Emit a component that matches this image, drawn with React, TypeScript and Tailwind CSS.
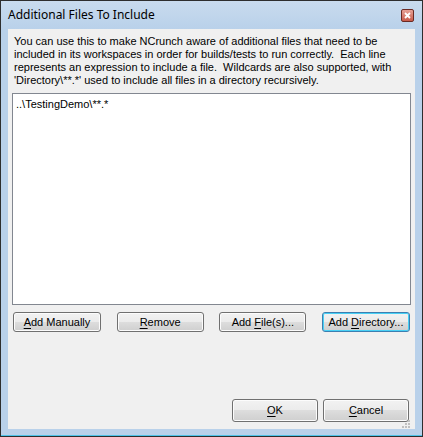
import React from "react";

function Btn({
  label,
  def,
  className,
}: {
  label: [string, string, string];
  def?: boolean;
  className: string;
}) {
  return (
    <button
      className={`${className} rounded-[3px] border ${
        def ? "border-[#3c7fb1] shadow-[inset_0_0_0_1px_#48d0f5]" : "border-[#707070] shadow-[inset_0_0_0_1px_#fcfcfc]"
      } bg-[linear-gradient(#f2f2f2_0%,#ebebeb_50%,#dddddd_50%,#cfcfcf_100%)] text-[11px] text-black leading-none flex items-center justify-center`}
    >
      <span>
        {label[0]}
        <span className="underline underline-offset-2">{label[1]}</span>
        {label[2]}
      </span>
    </button>
  );
}

export default function App() {
  return (
    <div
      className="w-[423px] h-[437px] bg-[#b9d1ea] border border-[#2e2e2e] border-b-0 flex flex-col"
      style={{ fontFamily: '"Liberation Sans", Arial, sans-serif' }}
    >
      {/* title bar */}
      <div className="h-[28px] bg-[linear-gradient(#c9dbee,#b9d1ea)] flex items-center justify-between pl-[7px] pr-[8px]">
        <span className="text-[12px] text-black" style={{ fontFamily: '"Noto Sans", "Liberation Sans", sans-serif' }}>
          Additional Files To Include
        </span>
        <div className="w-[13px] h-[13px] rounded-[2px] border border-[#6b2a23] bg-[linear-gradient(#e7a196,#c85b4b)] flex items-center justify-center">
          <svg width="7" height="7" viewBox="0 0 7 7">
            <path d="M1 1 L6 6 M6 1 L1 6" stroke="#fff" strokeWidth="1.8" />
          </svg>
        </div>
      </div>

      {/* client area */}
      <div className="mx-[7px] h-[400px] bg-[#f0f0f0] flex flex-col px-[4px]">
        <p className="mt-[6px] pl-[2px] text-[11px] leading-[13px] text-black">
          You can use this to make NCrunch aware of additional files that need to be included in its workspaces in
          order for builds/tests to run correctly.&nbsp; Each line represents an expression to include a file.&nbsp;
          Wildcards are also supported, with 'Directory\**.*' used to include all files in a directory recursively.
        </p>
        <div className="mt-[6px] h-[212px] bg-white border border-[#828790] px-[3px] pt-[2px] text-[11px] text-black">
          ..\TestingDemo\**.*
        </div>
        <div className="mt-[7px] flex justify-between px-[1px]">
          <Btn className="w-[88px] h-[20px]" label={["", "A", "dd Manually"]} />
          <Btn className="w-[87px] h-[20px]" label={["", "R", "emove"]} />
          <Btn className="w-[87px] h-[20px]" label={["Add ", "F", "ile(s)..."]} />
          <Btn className="w-[88px] h-[20px]" def label={["Add ", "D", "irectory..."]} />
        </div>
        <div className="mt-auto mb-[7px] flex justify-end gap-[5px] pr-[2px] relative">
          <Btn className="w-[86px] h-[23px]" label={["", "O", "K"]} />
          <Btn className="w-[86px] h-[23px]" label={["", "C", "ancel"]} />
          <svg className="absolute right-[1px] bottom-[-6px]" width="8" height="8" viewBox="0 0 8 8">
            {[
              [6, 0],
              [6, 3],
              [3, 3],
              [6, 6],
              [3, 6],
              [0, 6],
            ].map(([x, y], i) => (
              <rect key={i} x={x} y={y} width="2" height="2" fill="#c0c0c0" />
            ))}
          </svg>
        </div>
      </div>
      <div className="flex-1" />
      <div className="h-[1px] bg-[#4fc3e8]" />
      <div className="h-[1px] bg-[#2e2e2e]" />
    </div>
  );
}
